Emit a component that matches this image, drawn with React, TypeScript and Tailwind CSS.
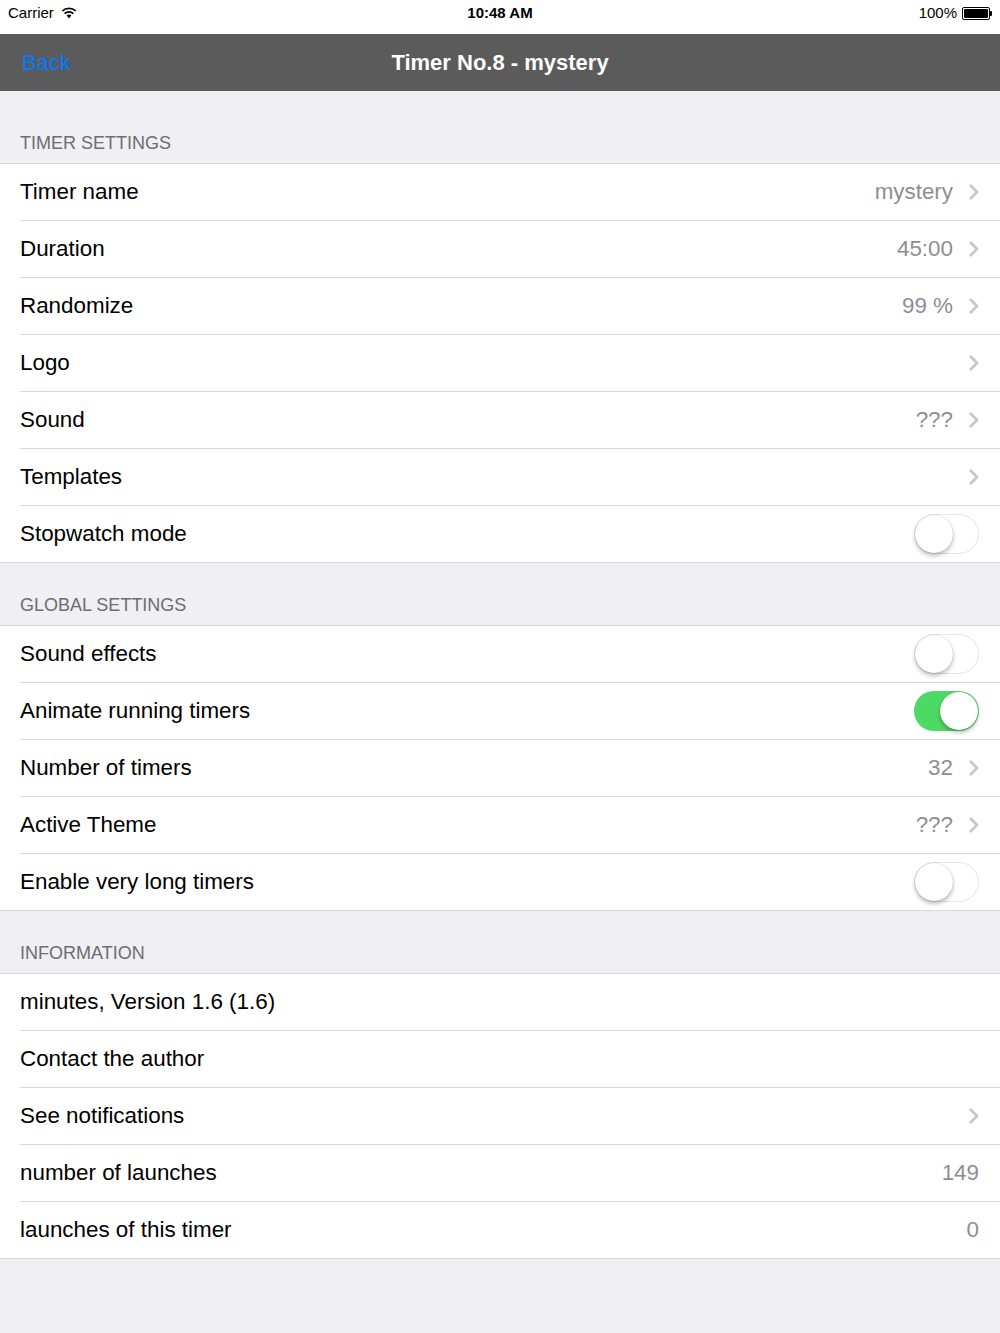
import { useState } from "react"

type Row = {
  label: string
  value?: string
  chevron?: boolean
  toggle?: boolean
  on?: boolean
}

const sections: { title: string; first?: boolean; rows: Row[] }[] = [
  {
    title: "TIMER SETTINGS",
    first: true,
    rows: [
      { label: "Timer name", value: "mystery", chevron: true },
      { label: "Duration", value: "45:00", chevron: true },
      { label: "Randomize", value: "99 %", chevron: true },
      { label: "Logo", chevron: true },
      { label: "Sound", value: "???", chevron: true },
      { label: "Templates", chevron: true },
      { label: "Stopwatch mode", toggle: true, on: false },
    ],
  },
  {
    title: "GLOBAL SETTINGS",
    rows: [
      { label: "Sound effects", toggle: true, on: false },
      { label: "Animate running timers", toggle: true, on: true },
      { label: "Number of timers", value: "32", chevron: true },
      { label: "Active Theme", value: "???", chevron: true },
      { label: "Enable very long timers", toggle: true, on: false },
    ],
  },
  {
    title: "INFORMATION",
    rows: [
      { label: "minutes, Version 1.6 (1.6)" },
      { label: "Contact the author" },
      { label: "See notifications", chevron: true },
      { label: "number of launches", value: "149" },
      { label: "launches of this timer", value: "0" },
    ],
  },
]

function Chevron() {
  return (
    <svg width="10" height="16" viewBox="0 0 10 16" className="ml-[16px] shrink-0">
      <path d="M1.8 1.8 L8 8 L1.8 14.2" fill="none" stroke="#c7c7cc" strokeWidth="2.8" strokeLinecap="round" strokeLinejoin="round" />
    </svg>
  )
}

function Toggle({ initial }: { initial: boolean }) {
  const [on, setOn] = useState(initial)
  return (
    <button
      onClick={() => setOn(!on)}
      className={`relative w-[65px] h-[40px] rounded-full shrink-0 transition-colors ${
        on ? "bg-[#4cd964]" : "bg-white border-[1.5px] border-[#e5e5ea]"
      }`}
    >
      <span
        className={`absolute top-1/2 -translate-y-1/2 w-[38px] h-[38px] rounded-full bg-white shadow-[0_3px_4px_rgba(0,0,0,0.25),0_0_1px_rgba(0,0,0,0.3)] ${
          on ? "right-[1px]" : "left-[0px]"
        }`}
      />
    </button>
  )
}

function StatusBar() {
  return (
    <div className="h-[34px] bg-white flex items-start justify-between px-[8px] pt-[4px] text-[15px] leading-[18px] text-black relative">
      <div className="flex items-center gap-[7px]">
        <span>Carrier</span>
        <svg width="16" height="12" viewBox="0 0 16 12">
          <path d="M8 11.5 L5.6 8.6 A3.6 3.6 0 0 1 10.4 8.6 Z" fill="#000" />
          <path d="M3.6 6.6 A6.4 6.4 0 0 1 12.4 6.6" fill="none" stroke="#000" strokeWidth="1.6" />
          <path d="M1.2 4 A10 10 0 0 1 14.8 4" fill="none" stroke="#000" strokeWidth="1.6" />
        </svg>
      </div>
      <span className="absolute left-1/2 top-[4px] -translate-x-1/2 font-semibold">10:48 AM</span>
      <div className="flex items-center gap-[5px]">
        <span>100%</span>
        <div className="flex items-center">
          <div className="w-[28px] h-[13px] border border-black rounded-[2px] p-[1px]">
            <div className="w-full h-full bg-black rounded-[1px]" />
          </div>
          <div className="w-[2px] h-[5px] bg-black rounded-r-[1px]" />
        </div>
      </div>
    </div>
  )
}

export default function App() {
  return (
    <div
      className="w-[1000px] min-h-[1333px] bg-[#efeff4] flex flex-col"
      style={{ fontFamily: '"Liberation Sans", Arial, sans-serif' }}
    >
      <StatusBar />
      <div className="h-[57px] bg-[#5b5b5b] relative flex items-center">
        <span className="pl-[22px] text-[22px] text-[#007aff]">Back</span>
        <span className="absolute left-1/2 -translate-x-1/2 text-[22px] font-semibold text-white">
          Timer No.8 - mystery
        </span>
      </div>

      {sections.map((section) => (
        <div key={section.title}>
          <div
            className={`${section.first ? "h-[72px]" : "h-[62px]"} flex items-end pl-[20px] pb-[9px] text-[18px] leading-[21px] text-[#6d6d72]`}
          >
            {section.title}
          </div>
          <div className="bg-white border-y border-[#d8d8dc]">
            {section.rows.map((row, i) => {
              const last = i === section.rows.length - 1
              return (
                <div key={row.label} className="pl-[20px]">
                  <div
                    className={`flex items-center pr-[21px] ${
                      last ? "h-[56px]" : "h-[57px] border-b border-[#d8d8dc]"
                    }`}
                  >
                    <span className="flex-1 text-[22.4px] text-black">{row.label}</span>
                    {row.value && <span className="text-[22.4px] text-[#8e8e93]">{row.value}</span>}
                    {row.chevron && <Chevron />}
                    {row.toggle && <Toggle initial={!!row.on} />}
                  </div>
                </div>
              )
            })}
          </div>
        </div>
      ))}
    </div>
  )
}
